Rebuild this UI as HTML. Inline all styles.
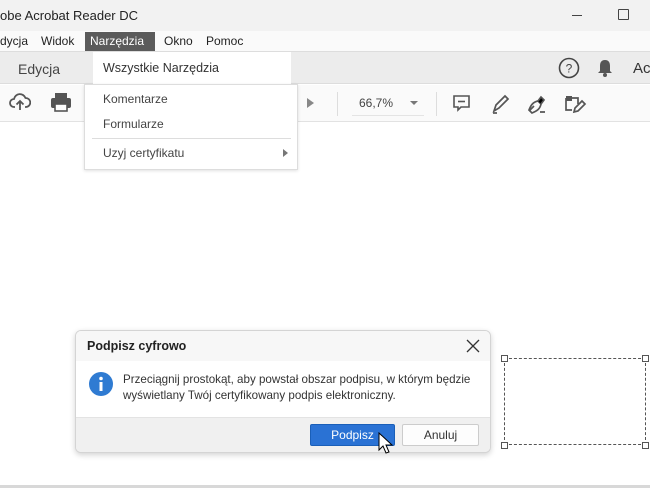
<!DOCTYPE html>
<html><head><meta charset="utf-8"><style>
*{margin:0;padding:0;box-sizing:border-box}
body{width:650px;height:488px;overflow:hidden;background:#fff;font-family:"Liberation Sans","DejaVu Sans",sans-serif;color:#333;position:relative}
.a{position:absolute;white-space:nowrap}
</style></head><body>
<div class="a" style="left:0;top:0;width:650px;height:31px;background:#f2f2f2"></div>
<div class="a" style="left:0;top:8px;font-size:13px;color:#222">obe Acrobat Reader DC</div>
<div class="a" style="left:572px;top:15px;width:10px;height:1px;background:#444"></div>
<div class="a" style="left:618px;top:9px;width:11px;height:11px;border:1px solid #444;border-radius:1px"></div>
<div class="a" style="left:0;top:31px;width:650px;height:21px;background:#fafafa;border-bottom:1px solid #ddd"></div>
<div class="a" style="left:0;top:34px;font-size:12px;color:#222">dycja</div>
<div class="a" style="left:41px;top:34px;font-size:12px;color:#222">Widok</div>
<div class="a" style="left:85px;top:32px;width:70px;height:19px;background:#5b5b5b"></div>
<div class="a" style="left:90px;top:34px;font-size:12px;color:#fff">Narzędzia</div>
<div class="a" style="left:164px;top:34px;font-size:12px;color:#222">Okno</div>
<div class="a" style="left:206px;top:34px;font-size:12px;color:#222">Pomoc</div>
<div class="a" style="left:0;top:52px;width:650px;height:32px;background:#ececec;border-bottom:1px solid #ddd"></div>
<div class="a" style="left:18px;top:61px;font-size:14px;color:#444">Edycja</div>
<div class="a" style="left:93px;top:52px;width:198px;height:33px;background:#fff"></div>
<div class="a" style="left:103px;top:61px;font-size:12.5px;color:#333">Wszystkie Narzędzia</div>
<svg class="a" style="left:558px;top:57px" width="22" height="22"><circle cx="11" cy="11" r="9.5" fill="none" stroke="#444" stroke-width="1.6"/><text x="11" y="15.5" font-size="12" text-anchor="middle" fill="#444" font-family="Liberation Sans">?</text></svg>
<svg class="a" style="left:596px;top:58px" width="18" height="20"><path d="M9 2c-4 0-5 3-5 6v5l-2 2h14l-2-2V8c0-3-1-6-5-6z" fill="#555"/><circle cx="9" cy="17" r="2" fill="#555"/></svg>
<div class="a" style="left:633px;top:60px;font-size:15px;color:#333">Ac</div>
<div class="a" style="left:0;top:85px;width:650px;height:37px;background:#fafafa;border-bottom:1px solid #e2e2e2"></div>
<svg class="a" style="left:9px;top:92px" width="22" height="20"><path d="M6 15H5a4 4 0 0 1 0-8 6 6 0 0 1 11.5-1A4.5 4.5 0 0 1 17 15h-1" fill="none" stroke="#555" stroke-width="1.8"/><path d="M11 18V9M7.5 12.5L11 9l3.5 3.5" fill="none" stroke="#555" stroke-width="1.8"/></svg>
<svg class="a" style="left:50px;top:92px" width="22" height="20"><rect x="5" y="1" width="12" height="5" fill="#555"/><rect x="1" y="6" width="20" height="10" rx="2" fill="#555"/><rect x="5" y="12" width="12" height="7" fill="#fff" stroke="#555" stroke-width="1.6"/></svg>
<div class="a" style="left:84px;top:84px;width:214px;height:86px;background:#fff;border:1px solid #ddd;box-shadow:0 1px 3px rgba(0,0,0,.12)"></div>
<div class="a" style="left:103px;top:92px;font-size:12px;color:#444">Komentarze</div>
<div class="a" style="left:103px;top:117px;font-size:12px;color:#444">Formularze</div>
<div class="a" style="left:92px;top:138px;width:199px;height:1px;background:#ddd"></div>
<div class="a" style="left:103px;top:146px;font-size:12px;color:#444">Uzyj certyfikatu</div>
<div class="a" style="left:283px;top:149px;width:0;height:0;border-left:5px solid #777;border-top:4px solid transparent;border-bottom:4px solid transparent"></div>
<div class="a" style="left:307px;top:98px;width:0;height:0;border-left:7px solid #888;border-top:5px solid transparent;border-bottom:5px solid transparent"></div>
<div class="a" style="left:337px;top:92px;width:1px;height:24px;background:#ddd"></div>
<div class="a" style="left:359px;top:96px;font-size:12px;color:#444">66,7%</div>
<div class="a" style="left:352px;top:115px;width:72px;height:1px;background:#e4e4e4"></div>
<div class="a" style="left:410px;top:101px;width:0;height:0;border-top:4px solid #777;border-left:4px solid transparent;border-right:4px solid transparent"></div>
<div class="a" style="left:436px;top:92px;width:1px;height:24px;background:#ddd"></div>
<svg class="a" style="left:452px;top:94px" width="20" height="20"><path d="M2 2h15v11H9l-3 3v-3H2z" fill="none" stroke="#555" stroke-width="1.6"/><path d="M6 7.5h7" stroke="#555" stroke-width="1.6"/></svg>
<svg class="a" style="left:490px;top:93px" width="22" height="22"><path d="M4 18l2-6L15 3l3 3-9 9z" fill="none" stroke="#555" stroke-width="1.7"/><path d="M3 20h4" stroke="#555" stroke-width="1.7"/></svg>
<svg class="a" style="left:526px;top:93px" width="22" height="22"><path d="M3 17c2-5 4-8 9-9l3 3c-1 5-4 7-9 9z" fill="none" stroke="#555" stroke-width="1.7"/><path d="M12 8l3-4 3 3-3 4M8 13l-5 5M14 19h5" stroke="#555" stroke-width="1.7"/></svg>
<svg class="a" style="left:563px;top:93px" width="24" height="22"><path d="M3 5h12v6M3 5v12h6" fill="none" stroke="#555" stroke-width="1.7"/><rect x="3" y="3" width="6" height="5" fill="#555"/><path d="M11 19l1-4 7-7 3 3-7 7z" fill="none" stroke="#555" stroke-width="1.7"/></svg>
<div class="a" style="left:0;top:485px;width:650px;height:3px;background:#d8d8d8"></div>
<div class="a" style="left:75px;top:330px;width:416px;height:123px;background:#fff;border:1px solid #d4d4d4;border-radius:6px;box-shadow:0 2px 6px rgba(0,0,0,.18);overflow:hidden">
 <div class="a" style="left:0;top:0;width:416px;height:30px;background:#f7f7f7"></div>
 <div class="a" style="left:11px;top:8px;font-size:12.5px;font-weight:bold;color:#222">Podpisz cyfrowo</div>
 <svg class="a" style="left:390px;top:8px" width="14" height="14"><path d="M1 1l12 12M13 1L1 13" stroke="#333" stroke-width="1.3"/></svg>
 <div class="a" style="left:0;top:86px;width:416px;height:37px;background:#f0f0f0;border-top:1px solid #e3e3e3"></div>
</div>
<svg class="a" style="left:89px;top:372px" width="24" height="24"><circle cx="12" cy="12" r="12" fill="#2f7bd2"/><rect x="10.5" y="10" width="3" height="9" fill="#fff"/><circle cx="12" cy="6.5" r="1.8" fill="#fff"/></svg>
<div class="a" style="left:123px;top:373px;font-size:11.6px;color:#333">Przeciągnij prostokąt, aby powstał obszar podpisu, w którym będzie</div>
<div class="a" style="left:123px;top:389px;font-size:11.6px;color:#333">wyświetlany Twój certyfikowany podpis elektroniczny.</div>
<div class="a" style="left:310px;top:424px;width:85px;height:22px;background:#2a72d4;border:1px solid #1a5fb8;border-radius:2px;color:#fff;font-size:12px;text-align:center;line-height:20px">Podpisz</div>
<div class="a" style="left:402px;top:424px;width:77px;height:22px;background:#fdfdfd;border:1px solid #ccc;border-radius:2px;color:#333;font-size:12px;text-align:center;line-height:20px">Anuluj</div>
<svg class="a" style="left:378px;top:432px" width="16" height="24"><path d="M1 1v17l4-4 3 7 3-1-3-7h6z" fill="#fff" stroke="#000" stroke-width="1"/></svg>
<div class="a" style="left:504px;top:358px;width:142px;height:87px;border:1px dashed #555"></div>
<div class="a" style="left:501px;top:355px;width:7px;height:7px;border:1px solid #555;background:#fff"></div>
<div class="a" style="left:642px;top:355px;width:7px;height:7px;border:1px solid #555;background:#fff"></div>
<div class="a" style="left:501px;top:442px;width:7px;height:7px;border:1px solid #555;background:#fff"></div>
<div class="a" style="left:642px;top:442px;width:7px;height:7px;border:1px solid #555;background:#fff"></div>
</body></html>
